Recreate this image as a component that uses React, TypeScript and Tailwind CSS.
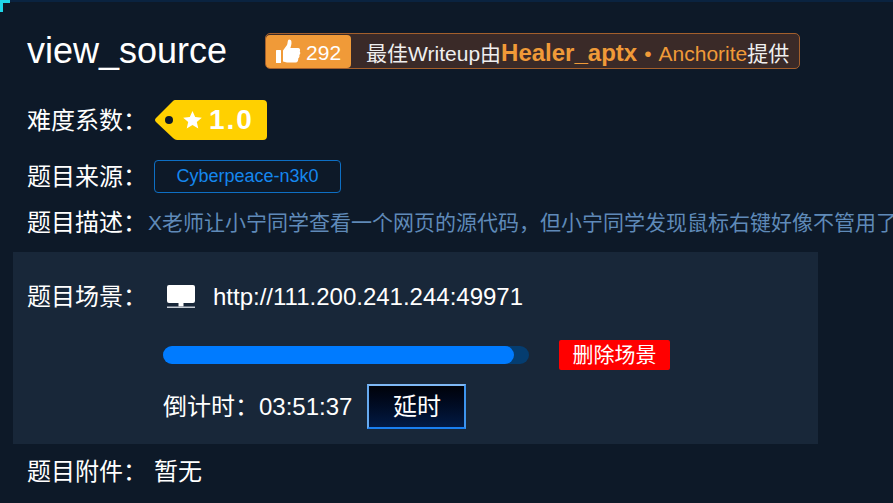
const FONT = "font-['Liberation_Sans','Noto_Sans_CJK_SC',sans-serif]";

function ThumbIcon() {
  return (
    <svg width="26" height="27" viewBox="0 0 26 27" fill="#fff">
      <rect x="1" y="12" width="5" height="13" rx="0.5" />
      <path d="M8 12.5 L12 7 C12.6 5.8 12.5 4 13 2.4 C13.6 0.8 16 1.2 16.4 3.4 C16.8 6 15.8 8.4 15.4 10 L23 10 C25 10 25.6 12.2 24.8 13.4 C25.6 14.6 25.4 16.2 24.3 17 C24.8 18.4 24.3 19.8 23.2 20.4 C23.5 22 22.6 24.6 20.6 24.6 L12 24.6 C10.4 24.6 9.4 23.8 8 23.6 Z" />
    </svg>
  );
}

function MonitorIcon() {
  return (
    <svg width="28" height="24" viewBox="0 0 28 24">
      <rect x="0" y="0" width="28" height="18" rx="2" fill="#fff" />
      <rect x="11.5" y="18" width="5" height="3.5" fill="#fff" />
      <rect x="0" y="21.5" width="28" height="1.5" fill="#c5ccd4" />
    </svg>
  );
}

function LevelTag() {
  return (
    <div className="relative flex h-[40px] w-[112px] items-center">
      <svg className="absolute inset-0" width="112" height="40" viewBox="0 0 112 40">
        <path
          d="M20 0 H108 Q112 0 112 4 V36 Q112 40 108 40 H22 Q20 40 18 38 L1 22 Q-1 20 1 18 L18 1 Q19 0 20 0 Z"
          fill="#ffd000"
        />
        <circle cx="14" cy="20" r="4" fill="#0d1928" />
        <path
          d="M37.5 11 L40.2 17.1 L46.8 17.7 L41.8 22.1 L43.3 28.5 L37.5 25.1 L31.7 28.5 L33.2 22.1 L28.2 17.7 L34.8 17.1 Z"
          fill="#fff"
        />
      </svg>
      <span className="relative ml-[54px] text-[28px] font-bold tracking-[2px] text-white">1.0</span>
    </div>
  );
}

export default function App() {
  return (
    <div className={`${FONT} relative h-[503px] w-[893px] overflow-hidden bg-[#0d1928] text-white`}>
      <div className="h-[2px] bg-[#0a2340]" />
      <div className="absolute left-0 top-0 h-[12px] w-[10px] border-l-[3px] border-t-[3px] border-[#1fd5e8]" />

      <div className="flex h-[98px] items-center pl-[27px]">
        <h1 className="text-[36px] leading-none">view_source</h1>
        <div className="ml-[38px] flex h-[36px] w-[535px] items-center whitespace-nowrap rounded-[5px] border border-[#a35f2c] bg-[#3a2a28]">
          <div className="flex h-[33px] w-[85px] items-center rounded-[4px] bg-[#f09a38] pl-[9px]">
            <ThumbIcon />
            <span className="ml-[5px] pt-[3px] text-[21px] text-white">292</span>
          </div>
          <div className="ml-[15px] flex items-baseline pt-[4px] text-[21px] text-[#efefef]">
            <span>最佳Writeup由</span>
            <span className="text-[24px] font-bold text-[#f09a38]">Healer_aptx</span>
            <span className="ml-[7px] text-[#f09a38]">•</span>
            <span className="ml-[7px] text-[#f09a38]">Anchorite</span>
            <span>提供</span>
          </div>
        </div>
      </div>

      <div className="flex h-[40px] items-center pl-[27px]">
        <span className="w-[128px] pt-[2px] text-[24px]">难度系数：</span>
        <LevelTag />
      </div>

      <div className="mt-[20px] flex h-[32px] items-center pl-[27px]">
        <span className="w-[127px] pt-[2px] text-[24px]">题目来源：</span>
        <span className="flex h-[33px] w-[187px] items-center justify-center rounded-[4px] border border-[#0d6fc4] text-[18px] text-[#1587ee]">
          Cyberpeace-n3k0
        </span>
      </div>

      <div className="mt-[14px] flex h-[32px] items-center whitespace-nowrap pl-[27px]">
        <span className="pt-[2px] text-[24px]">题目描述：</span>
        <span className="ml-[1px] pt-[2px] text-[21px] text-[#5f8ab8]">
          X老师让小宁同学查看一个网页的源代码，但小宁同学发现鼠标右键好像不管用了
        </span>
      </div>

      <div className="ml-[13px] mt-[14px] h-[192px] w-[805px] bg-[#182739] pl-[14px]">
        <div className="flex items-center pt-[27px]">
          <span className="w-[140px] text-[24px]">题目场景：</span>
          <MonitorIcon />
          <span className="ml-[18px] text-[24px]">http://111.200.241.244:49971</span>
        </div>
        <div className="ml-[136px] mt-[25px] flex items-center">
          <div className="h-[18px] w-[366px] rounded-full bg-[#053d70]">
            <div className="h-[18px] w-[351px] rounded-full bg-[#007bff]" />
          </div>
          <span className="ml-[30px] flex h-[30px] w-[111px] items-center justify-center rounded-[2px] bg-[#ff0000] text-[21px]">
            删除场景
          </span>
        </div>
        <div className="ml-[136px] mt-[14px] flex items-center">
          <span className="text-[24px]">倒计时：03:51:37</span>
          <span className="ml-[15px] flex h-[45px] w-[99px] items-center justify-center border-2 border-t-[#7fb8f5] border-l-[#66aaf0] border-r-[#3d94ee] border-b-[#1a7ff0] bg-gradient-to-b from-[#00030a] to-[#021a45] text-[24px]">
            延时
          </span>
        </div>
      </div>

      <div className="mt-[10px] flex items-center pl-[27px]">
        <span className="w-[127px] text-[24px]">题目附件：</span>
        <span className="text-[24px]">暂无</span>
      </div>
    </div>
  );
}
